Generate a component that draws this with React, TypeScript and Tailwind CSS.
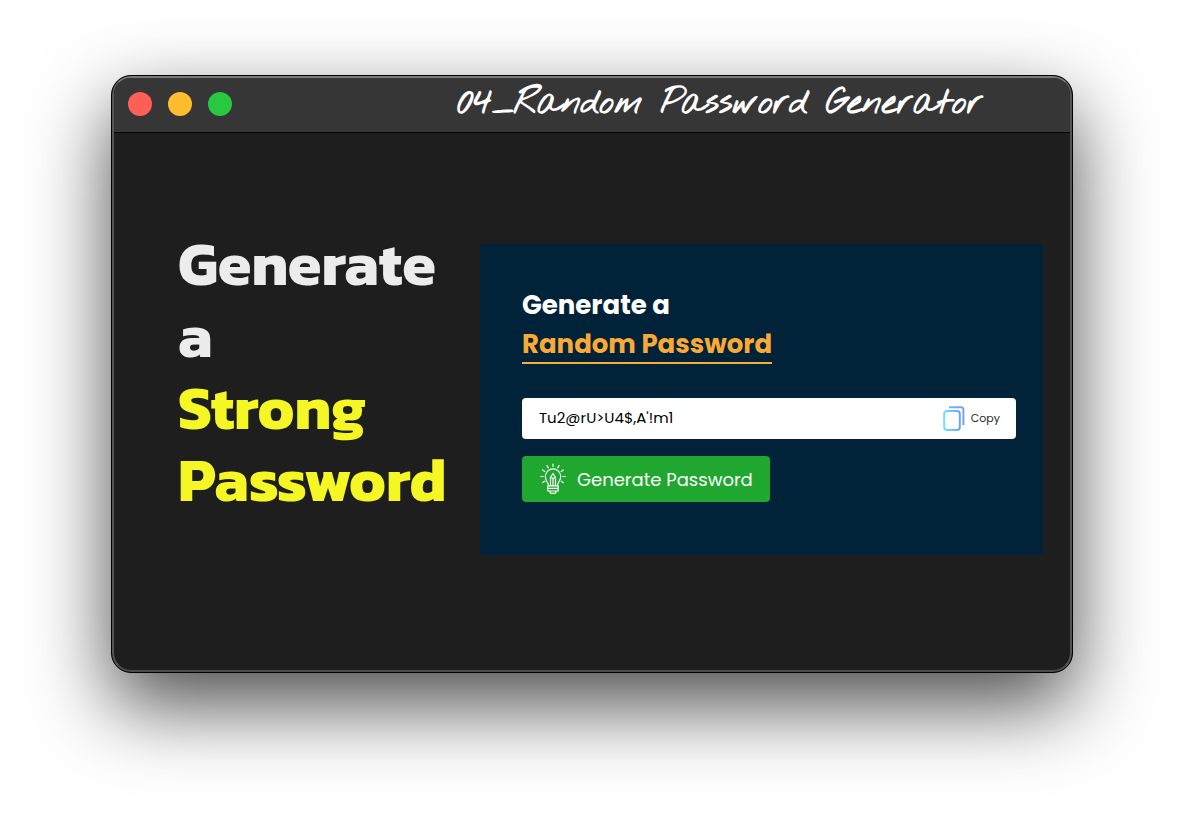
import { useState } from "react";

function CopyIcon() {
  return (
    <svg width="22" height="26" viewBox="0 0 22 26" fill="none" aria-hidden="true">
      <defs>
        <linearGradient id="copy-stroke" x1="0" y1="0" x2="1" y2="0">
          <stop offset="0" stopColor="#6fe0fb" />
          <stop offset="1" stopColor="#6aa6fb" />
        </linearGradient>
        <linearGradient id="copy-back" gradientUnits="userSpaceOnUse" x1="6" y1="0" x2="21" y2="0">
          <stop offset="0" stopColor="#74b8fb" />
          <stop offset="1" stopColor="#6b9dfa" />
        </linearGradient>
      </defs>
      <rect x="1.200" y="5" width="15.600" height="19" rx="3" stroke="url(#copy-stroke)" strokeWidth="2" />
      <path d="M6 1.200h12.200a2.200 2.200 0 0 1 2.200 2.200V19" stroke="url(#copy-back)" strokeWidth="1.900" />
    </svg>
  );
}

function BulbIcon() {
  return (
    <svg
      width="26"
      height="32"
      viewBox="0 0 26 32"
      fill="none"
      stroke="#ffffff"
      strokeWidth="1.200"
      strokeLinecap="round"
      strokeLinejoin="round"
      aria-hidden="true"
    >
      <path d="M13 1v2.500M7 2.600l1.200 2.200M19 2.600l-1.200 2.200M2.600 7l2.200 1.400M23.400 7l-2.200 1.400M.8 13.500h2.400M25.200 13.500h-2.400M2.800 19.600l2-1.400M23.200 19.600l-2-1.400" />
      <path d="M8.500 22.500c0-3-3.200-4.400-3.200-8.900a7.700 7.700 0 0 1 15.400 0c0 4.500-3.200 5.900-3.200 8.900" />
      <path d="M10.500 22.500v-8L13 10.500l2.500 4v8M10.500 15h5M13 15v7.500" />
      <path d="M7.800 22.800h10.400v2.600H7.800zM7.800 25.400h10.400V28H7.800zM9.500 28.200l1.300 2.200h4.400l1.300-2.200" />
    </svg>
  );
}

const symbols = "ABCDEFGHIJKLMNOPQRSTUVWXYZabcdefghijklmnopqrstuvwxyz0123456789@#$%^&*()_+~|}{[]<>/-=";

export default function App() {
  const [password, setPassword] = useState("Tu2@rU>U4$,A'!m1");

  const generate = () => {
    let next = "";
    for (let i = 0; i < 16; i++) {
      next += symbols[Math.floor(Math.random() * symbols.length)];
    }
    setPassword(next);
  };

  return (
    <div className="min-h-screen overflow-hidden bg-white px-[111px] py-[75px]">
      <main className="overflow-hidden rounded-[20px] border border-black bg-[#1e1e1e] shadow-[0_32px_80px_rgba(0,0,0,0.7)]">
        <div className="overflow-hidden rounded-[19px] border-2 border-t-[#7a7a7a] border-x-[#555555] border-b-[#4c4c4c]">
          <header className="flex h-[55px] items-center justify-between border-b border-black bg-[#363636] pr-[87px] pb-0.5 pl-[14px]">
            <div className="flex gap-4">
              <span className="size-6 rounded-full bg-[#ff5f57]" />
              <span className="size-6 rounded-full bg-[#febc2e]" />
              <span className="size-6 rounded-full bg-[#28c840]" />
            </div>
            <p className="font-['Nothing_You_Could_Do','DejaVu_Sans',sans-serif] text-[35px] leading-10 font-bold whitespace-nowrap text-white">
              04_Random Password Generator
            </p>
          </header>

          <div className="flex items-start pt-[95px] pr-[27px] pb-[115px] pl-16">
            <h1 className="w-[302px] shrink-0 font-['Kanit','Noto_Sans',sans-serif] text-[61px] leading-[72px] font-bold text-[#ececec]">
              Generate
              <br />a<br />
              <span className="text-[#f5f725]">
                Strong
                <br />
                Password
              </span>
            </h1>

            <section className="mt-4 min-w-0 flex-1 bg-[#002339] pt-10 pr-[27px] pb-[53px] pl-[42px] font-['Poppins','Inter',sans-serif]">
              <h2 className="text-[26px] leading-[42px] font-bold text-white">
                Generate a
                <span className="block w-fit border-b-2 border-[#faae36] leading-9 whitespace-nowrap text-[#faa936]">
                  Random Password
                </span>
              </h2>

              <div className="mt-[34px] flex h-[41px] items-center rounded bg-white pr-4 pl-[17px] text-black">
                <input
                  type="text"
                  aria-label="Generated password"
                  readOnly
                  value={password}
                  className="min-w-0 flex-1 bg-transparent text-[15px] outline-none"
                />
                <button
                  type="button"
                  onClick={() => navigator.clipboard?.writeText(password)}
                  className="flex items-center gap-1.5 text-[11px] text-[#222222]"
                >
                  <CopyIcon />
                  Copy
                </button>
              </div>

              <button
                type="button"
                onClick={generate}
                className="mt-[17px] flex h-[46px] items-center gap-[11px] rounded bg-[#1fa72f] pr-[17px] pl-[18px] text-[18px] whitespace-nowrap text-white"
              >
                <BulbIcon />
                Generate Password
              </button>
            </section>
          </div>
        </div>
      </main>
    </div>
  );
}
